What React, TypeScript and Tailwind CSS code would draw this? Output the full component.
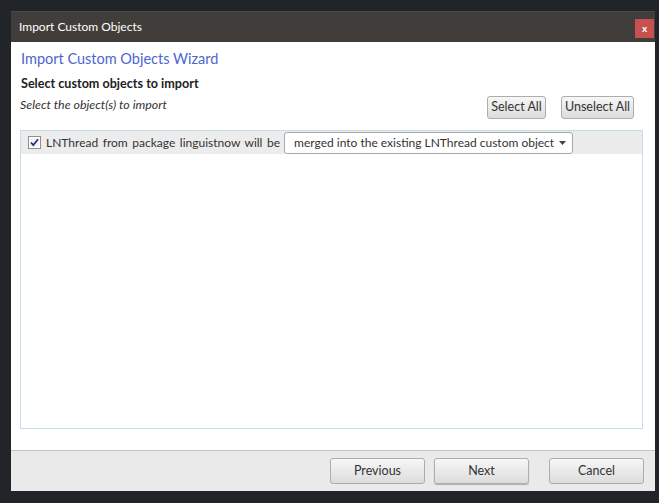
import React from "react"

const font = { fontFamily: 'Lato, "Open Sans", sans-serif' }

function Btn({ label, className = "" }: { label: string; className?: string }) {
  return (
    <button
      className={`flex items-center justify-center whitespace-nowrap rounded-[3px] border border-[#adadad] bg-gradient-to-b from-[#f7f7f7] to-[#dcdcdc] text-[12.5px] text-[#333] ${className}`}
    >
      {label}
    </button>
  )
}

function CheckBox() {
  return (
    <svg width="13" height="13" viewBox="0 0 13 13" className="shrink-0">
      <rect x="0.5" y="0.5" width="12" height="12" fill="#fff" stroke="#8f8f8f" />
      <rect x="2" y="2" width="9" height="9" fill="#f4f4f4" />
      <path d="M3 6.5 L5.3 9.2 L10 3.2" fill="none" stroke="#2d2a8a" strokeWidth="1.8" />
    </svg>
  )
}

export default function App() {
  return (
    <div className="h-[503px] w-[659px] bg-[#212529] pl-[11px] pr-[4px] pt-[11px]" style={font}>
      <div className="flex h-[480px] flex-col bg-white">
        {/* title bar */}
        <div className="flex h-[31px] items-center justify-between border-t border-[#4b4948] bg-[#403d3a] pl-[8px] pr-[1px]">
          <span className="text-[12px] text-white">Import Custom Objects</span>
          <div className="mt-[2px] flex h-[19px] w-[19px] items-center justify-center bg-[#c75050] text-[10px] font-bold leading-none text-white">
            x
          </div>
        </div>

        {/* body */}
        <div className="flex flex-1 flex-col pl-[9px] pr-[12px] pt-[6px]">
          <div className="pl-[1px] text-[14.5px] leading-[22px] text-[#4a66d2]">Import Custom Objects Wizard</div>
          <div className="mt-[5px] pl-[1px] text-[12.6px] font-bold leading-[18px] text-[#222]">
            Select custom objects to import
          </div>
          <div className="mt-[3px] flex h-[23px] items-start justify-between">
            <span className="mt-[1px] text-[12.4px] italic leading-[16px] text-[#333]">Select the object(s) to import</span>
            <div className="flex gap-[15px] pr-[9px]">
              <Btn label="Select All" className="h-[23px] w-[59px]" />
              <Btn label="Unselect All" className="h-[23px] w-[73px]" />
            </div>
          </div>
          <div className="mb-[21px] mt-[11px] flex-1 border border-[#c7dce9]">
            <div className="flex h-[23px] items-center whitespace-nowrap bg-[#ececec] pl-[7px]">
              <CheckBox />
              <span className="ml-[5px] text-[12px] text-[#333] [word-spacing:1.5px]">
                LNThread from package linguistnow will be
              </span>
              <div className="ml-[4px] mt-[1px] flex h-[22px] w-[289px] shrink-0 items-center justify-between rounded-[3px] border border-[#a9a9a9] bg-white pl-[9px] pr-[6px]">
                <span className="text-[12px] text-[#333]">merged into the existing LNThread custom object</span>
                <svg width="7" height="4" viewBox="0 0 7 4">
                  <path d="M0 0 H7 L3.5 4 Z" fill="#444" />
                </svg>
              </div>
            </div>
          </div>
        </div>

        {/* footer */}
        <div className="flex h-[41px] justify-end gap-[9px] border-t border-[#c4c4c4] bg-[#eaeaea] pr-[11px] pt-[7px]">
          <Btn label="Previous" className="h-[26px] w-[95px]" />
          <Btn label="Next" className="h-[26px] w-[95px] border-[#707070] shadow-[0_1px_1px_rgba(0,0,0,0.25)]" />
          <Btn label="Cancel" className="ml-[11px] h-[26px] w-[95px]" />
        </div>
      </div>
    </div>
  )
}
